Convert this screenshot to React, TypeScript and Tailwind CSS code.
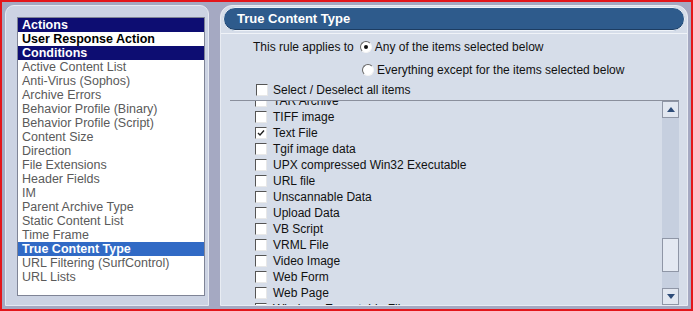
const leftItems = [
  { name: "Actions", kind: "head" },
  { name: "User Response Action", kind: "bold" },
  { name: "Conditions", kind: "head" },
  { name: "Active Content List" },
  { name: "Anti-Virus (Sophos)" },
  { name: "Archive Errors" },
  { name: "Behavior Profile (Binary)" },
  { name: "Behavior Profile (Script)" },
  { name: "Content Size" },
  { name: "Direction" },
  { name: "File Extensions" },
  { name: "Header Fields" },
  { name: "IM" },
  { name: "Parent Archive Type" },
  { name: "Static Content List" },
  { name: "Time Frame" },
  { name: "True Content Type", kind: "selected" },
  { name: "URL Filtering (SurfControl)" },
  { name: "URL Lists" },
];

const types = [
  { name: "TAR Archive" },
  { name: "TIFF image" },
  { name: "Text File", checked: true },
  { name: "Tgif image data" },
  { name: "UPX compressed Win32 Executable" },
  { name: "URL file" },
  { name: "Unscannable Data" },
  { name: "Upload Data" },
  { name: "VB Script" },
  { name: "VRML File" },
  { name: "Video Image" },
  { name: "Web Form" },
  { name: "Web Page" },
  { name: "Windows Executable File" },
];

const Checkbox = ({ checked = false }: { checked?: boolean }) => (
  <span className="flex h-[12px] w-[12px] shrink-0 items-center justify-center border border-t-[#555] border-l-[#555] border-b-[#e8e8e8] border-r-[#e8e8e8] bg-white">
    {checked && (
      <svg width="8" height="8" viewBox="0 0 8 8">
        <path d="M1 4 L3 6 L7 1.5" stroke="#222" strokeWidth="1.4" fill="none" />
      </svg>
    )}
  </span>
);

const Radio = ({ on = false }: { on?: boolean }) => (
  <span className="flex h-[12px] w-[12px] shrink-0 items-center justify-center rounded-full border border-t-[#666] border-l-[#666] border-b-[#f4f4f4] border-r-[#f4f4f4] bg-white">
    {on && <span className="h-[4px] w-[4px] rounded-full bg-[#111]" />}
  </span>
);

export default function App() {
  return (
    <div
      className="flex h-[311px] w-[693px] gap-[11px] overflow-hidden border-2 border-[#e3161b] bg-[#a5a9c2] px-[3px] pt-[3px] pb-[3px] text-[12px]"
      style={{ fontFamily: '"Liberation Sans", Arial, sans-serif' }}
    >
      {/* left panel */}
      <aside className="flex w-[204px] flex-col rounded-tl-[9px] rounded-tr-[9px] border border-[#e6eaf2] bg-[#ccd3e3] pl-[11px] pr-[3px] pt-[11px] pb-[9px]">
        <div className="flex-1 border border-[#7f8496] bg-white">
          {leftItems.map((item) => (
            <div
              key={item.name}
              className={`h-[14px] px-[4px] leading-[14px] ${
                item.kind === "head"
                  ? "bg-[#0d0d72] font-bold text-[12.5px] text-white"
                  : item.kind === "bold"
                  ? "font-bold text-[12.5px] text-black"
                  : item.kind === "selected"
                  ? "bg-[#316ac5] font-bold text-[12.5px] text-white"
                  : "text-[12.5px] text-[#5a5a5a]"
              }`}
            >
              {item.name}
            </div>
          ))}
        </div>
      </aside>

      {/* right panel */}
      <section className="flex flex-1 flex-col overflow-hidden rounded-tl-[12px] rounded-tr-[12px] border border-[#e8ecf3] bg-[#d6dde9]">
        <div className="px-[2px] pt-[1px]">
          <div className="flex h-[24px] items-center rounded-full border border-[#eef2f8] bg-[#2e5b8c] px-[13px] text-[13px] font-bold text-white shadow-[inset_0_-1px_0_#1d3d62]">
            True Content Type
          </div>
        </div>
        <div className="mt-[2px] border-t border-[#f0f3f8]" />

        <div className="flex items-center pl-[32px] pt-[4px] text-[#111]">
          <span>This rule applies to</span>
          <span className="ml-[6px] mr-[3px]">
            <Radio on />
          </span>
          <span>Any of the items selected below</span>
        </div>
        <div className="flex items-center pl-[141px] pt-[5px] text-[#111]">
          <span className="mr-[3px]">
            <Radio />
          </span>
          <span>Everything except for the items selected below</span>
        </div>
        <div className="flex items-center gap-[5px] pl-[35px] pt-[2px] text-[#111]">
          <Checkbox />
          <span>Select / Deselect all items</span>
        </div>

        <div className="ml-[9px] mr-[8px] mt-[1px] flex flex-1 overflow-hidden border-t border-[#8a8f9c]">
          <div className="flex-1 overflow-hidden">
            <div className="-mt-[8px]">
              {types.map((t) => (
                <div key={t.name} className="flex h-[16px] items-center gap-[6px] pl-[25px] text-[#111]">
                  <Checkbox checked={t.checked} />
                  <span className="leading-[16px]">{t.name}</span>
                </div>
              ))}
            </div>
          </div>

          {/* scrollbar */}
          <div className="flex w-[17px] flex-col bg-[#c6cfdf]">
            <div className="flex h-[17px] items-center justify-center border border-[#8f96a6] bg-[#e2e7f0]">
              <svg width="8" height="5" viewBox="0 0 8 5">
                <path d="M4 0 L8 5 L0 5 Z" fill="#2e4c78" />
              </svg>
            </div>
            <div className="flex-1" />
            <div className="h-[34px] border border-[#8f96a6] bg-[#e4e9f2]" />
            <div className="h-[16px]" />
            <div className="flex h-[17px] items-center justify-center border border-[#8f96a6] bg-[#e2e7f0]">
              <svg width="8" height="5" viewBox="0 0 8 5">
                <path d="M0 0 L8 0 L4 5 Z" fill="#2e4c78" />
              </svg>
            </div>
          </div>
        </div>
      </section>
    </div>
  );
}
